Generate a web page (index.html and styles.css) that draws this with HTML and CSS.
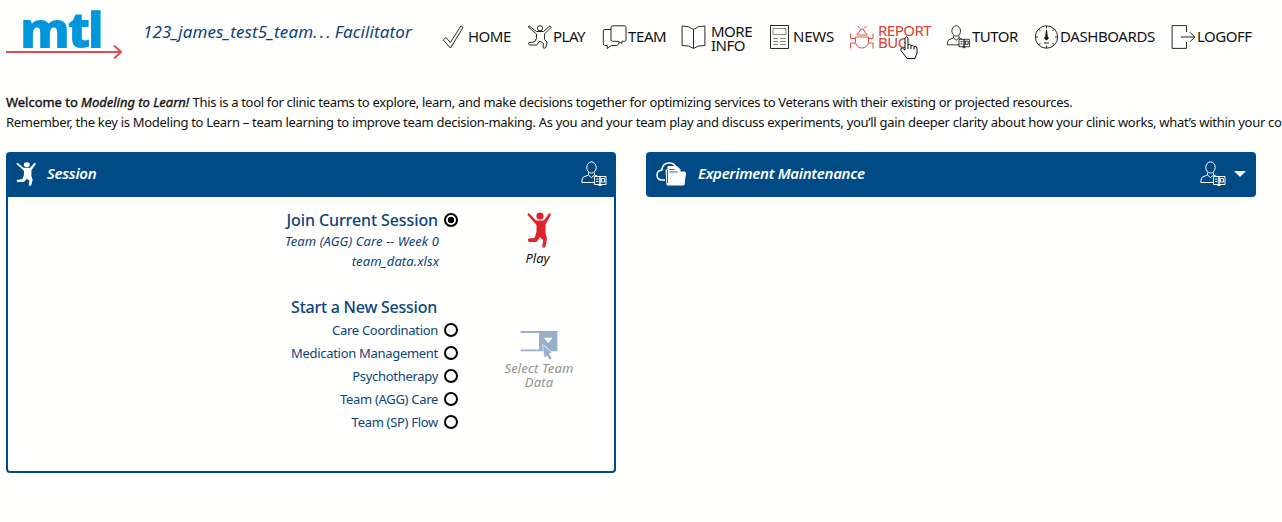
FILE: index.html
```
<!DOCTYPE html>
<html lang="en">
<head>
<meta charset="utf-8">
<title>Modeling to Learn</title>
<link rel="stylesheet" href="styles.css">
</head>
<body>
<svg class="defs" width="0" height="0" aria-hidden="true">
  <defs>
    <symbol id="jumper" viewBox="0 0 24 36" preserveAspectRatio="none">
      <circle cx="13" cy="4" r="3.600"/>
      <path d="M1.800 1 9 8.500H17L22.200 1 24 2.800 18.500 12.500V21L20 26.500 18.500 34.500Q17.500 36.500 15.500 35.300L15.300 33 16.300 28.500 13 25 9.500 30H2Q0 28.500 1.500 26.500L7.500 26 9.500 20V13L.3 2.800Z"/>
    </symbol>
    <symbol id="tutor" viewBox="0 0 26 26">
      <ellipse cx="10.500" cy="6.500" rx="4.700" ry="5.600"/>
      <path d="M7.500 11.500v2.500L2.500 16Q.8 17 .8 21.500H14M13.500 11.500v2.500l3 1.200M7.500 14l3 2.500 3-2.500"/>
      <path d="M13.500 15.500h5.500v8h-5.500zM19 15.500h6v8h-6zM15 18h2.500M15 20.500h2.500M20.500 17.500h3v3.500h-3zM17.500 24.500h3"/>
    </symbol>
  </defs>
</svg>
<header class="topbar">
  <div class="logo">
    <span class="logo-text">mtl</span>
    <svg class="logo-arrow" width="117" height="16" viewBox="0 0 117 16"><path d="M0 8H115M108 1.500 115 8 108 14.500"/></svg>
  </div>
  <div class="team">123_james_test5_team<span class="dots">...</span><span>Facilitator</span></div>
  <nav class="nav">
    <a class="item home"><svg viewBox="0 0 24 24"><path d="M.8 15 3.500 12.500 7.800 17.500 18.500.8 20.500 2.500 8 23Z"/></svg><span>HOME</span></a>
    <a class="item play"><svg viewBox="0 0 24 24"><circle cx="12.500" cy="3.200" r="2.600"/><path d="M1.500.8 9 6.500H16L22.500.8 23.500 2.500 17 9V14.500L19.500 17 18.500 22.500Q16.500 24 15.500 22.500L16 18.500 12.500 16 9 20H2Q0 19 1.500 17.500L7 17 9 13.500V9L.8 2Z"/></svg><span>PLAY</span></a>
    <a class="item chat"><svg viewBox="0 0 24 24"><path d="M10 .8h12q1.500 0 1.500 1.500v12.500q0 1.500-1.500 1.500h-2.500l-.3 2.200-3.500-2.200h-5.700q-1.500 0-1.500-1.500V2.300q0-1.500 1.500-1.500zM8.500 4.500H2.300q-1.500 0-1.500 1.500v12.500q0 2 1.500 2h2.500v3l4-3h5.500q2-.5 2.500-3.500"/></svg><span>TEAM</span></a>
    <a class="item info"><svg viewBox="0 0 24 24"><path d="M12 4.500Q8 .8.6 1V20.500Q8 20 12 23.500 16 20 23.400 20.500V1Q16 .8 12 4.500V23"/></svg><span>MORE<br>INFO</span></a>
    <a class="item news"><svg viewBox="0 0 24 24"><path d="M3 .5h18v23h-18z"/><path class="thin" d="M5.500 3.500h13v6h-13zM5.500 13.500h5M12.500 13.500h6M5.500 16.500h5M12.500 16.500h6M5.500 19.500h5M12.500 19.500h6"/></svg><span>NEWS</span></a>
    <a class="item bug"><svg viewBox="0 0 24 24"><path d="M8 .8 10.500 3.500M17 .8 14.500 3.500M7.500 10q0-2 2-2.500.5-3.500 3-3.500t3 3.500q2 .5 2 2.500zM6 12h13v5.500q-1.500 5.500-6.500 5.500T6 17.500zM6 13.500H1V8.500M19 13.500h4.500V8.500M6 18H1v5.500M19 18h4.500v5.500"/></svg><span>REPORT<br>BUG</span>
      <svg class="cursor" viewBox="0 0 20 25"><path d="M6 15V3Q7.500.500 9 3V10Q11 8.500 12 10.500 14 9.500 15 11.500 17.500 10.500 18 13V18L16 23.500H8L2 15.500Q1 12.500 3.500 13Z"/><path d="M9 10v4M12 10.500v3.500M15 11.500v3"/></svg></a>
    <a class="item tutor"><svg viewBox="0 0 26 26"><use href="#tutor"/></svg><span>TUTOR</span></a>
    <a class="item dash"><svg viewBox="0 0 24 24"><circle cx="12" cy="12" r="11.200"/><path d="M12 1v2.500M12 20.500v2.500M1 12h2.500M20.500 12H23M4.200 4.200l1.800 1.800M18 6l1.800-1.800M4.200 19.800 6 18M18 18l1.800 1.800M9.500 18h5"/><path class="solid" d="M12 5 12.800 11.500A1.700 1.700 0 1 1 11.200 11.500Z"/></svg><span>DASHBOARDS</span></a>
    <a class="item logoff"><svg viewBox="0 0 24 24"><path d="M15 7V.6H.6V23.400H15V17M9.500 12H23.300M18.500 7.200 23.300 12 18.500 16.800"/></svg><span>LOGOFF</span></a>
  </nav>
</header>
<section class="intro">
  <p><span class="strong">Welcome to <i>Modeling to Learn!</i></span> <span class="line-one">This is a tool for clinic teams to explore, learn, and make decisions together for optimizing services to Veterans with their existing or projected resources.</span></p>
  <p class="line-two">Remember, the key is Modeling to Learn – team learning to improve team decision-making. As you and your team play and discuss experiments, you’ll gain deeper clarity about how your clinic works, what’s within your co</p>
</section>
<main class="cards">
  <section class="card">
    <div class="card-head">
      <svg class="head-jumper" viewBox="0 0 24 36" preserveAspectRatio="none"><use href="#jumper"/></svg>
      <h2>Session</h2>
      <svg class="head-tutor" viewBox="0 0 26 26"><use href="#tutor"/></svg>
    </div>
    <div class="card-body">
      <div class="choices">
        <label class="big join"><span>Join Current Session</span><input type="radio" name="s" checked></label>
        <p class="detail">Team (AGG) Care -- Week 0</p>
        <p class="detail">team_data.xlsx</p>
        <h3 class="big start">Start a New Session</h3>
        <label><span>Care Coordination</span><input type="radio" name="s"></label>
        <label><span>Medication Management</span><input type="radio" name="s"></label>
        <label><span>Psychotherapy</span><input type="radio" name="s"></label>
        <label><span>Team (AGG) Care</span><input type="radio" name="s"></label>
        <label><span>Team (SP) Flow</span><input type="radio" name="s"></label>
      </div>
      <div class="actions">
        <div class="action go"><svg viewBox="0 0 24 36"><use href="#jumper"/></svg><span>Play</span></div>
        <div class="action select"><svg viewBox="0 0 38 31"><path d="M0 0H38V21H31L25 15 25 21H0V19H19V2H0Z"/><path class="arrow-down" d="M24 7h9l-4.500 5.500z"/><path class="pointer" d="M22.500 14 32.500 22 29.500 23.500 32.500 28.500 30 30 27 25.500 24.500 28Z"/></svg><span>Select Team<br>Data</span></div>
      </div>
    </div>
  </section>
  <section class="card collapsed">
    <div class="card-head">
      <svg class="head-folder" viewBox="0 0 30 24"><path class="cloud" d="M9 18H5.500Q1 17.500 1 13T6 8Q6.500 1 13 1 18 1 20 5"/><path class="folder" d="M10 8h2v-3.500h9l3 3V10h4.500q1 0 1 1L28 23H11Z"/><path class="lines" d="M13.500 7.500h5M13.500 10h8M11.500 8v13"/></svg>
      <h2>Experiment Maintenance</h2>
      <svg class="head-tutor" viewBox="0 0 26 26"><use href="#tutor"/></svg>
      <span class="caret"></span>
    </div>
  </section>
</main>
</body>
</html>
```
FILE: styles.css
```
* { box-sizing: border-box; }
body { margin: 0; width: 1282px; height: 522px; overflow: hidden; background: #fefefc; color: #111; font: 13px/20px "Noto Sans", "Open Sans", sans-serif; }
p, h2, h3 { margin: 0; }
svg { display: block; flex: none; fill: none; stroke: currentColor; }
.defs { position: absolute; }
.topbar { display: flex; height: 92px; padding-left: 6px; }
.logo { width: 137px; color: #0096dc; padding-top: 4px; }
.logo-text { display: block; width: max-content; margin-left: 14px; height: 40px; font: 800 50px/50px "Open Sans", sans-serif; letter-spacing: -2.6px; }
.logo-arrow { stroke: #dc4a55; stroke-width: 2; }
.team { width: 299px; padding-top: 20px; font-size: 17px; line-height: 24px; font-style: italic; letter-spacing: .1px; color: #0c447c; white-space: nowrap; }
.dots { letter-spacing: 2.200px; margin-right: 2px; }
.nav { display: grid; grid-template-columns: 85px 75px 79px 86px 82px 97px 88px 137px 100px; height: 74px; }
.item { position: relative; display: flex; align-items: center; gap: 1px; font-size: 15px; line-height: 14px; letter-spacing: -.5px; height: 74px; white-space: nowrap; }
.item > svg:first-child { width: 25px; height: 24px; stroke-width: .9; }
.item > span { margin-top: -2px; }
.item.info { gap: 5px; }
.item.info > span { margin-top: 1px; }
.item.bug { gap: 4px; line-height: 12.5px; color: #d8402f; }
.item.news > span { letter-spacing: -.2px; }
.item.dash > span, .item.chat > span { letter-spacing: -.4px; }
.thin { opacity: .55; }
.solid { fill: currentColor; }
.cursor { position: absolute; left: 50px; top: 35px; width: 20px; height: 25px; fill: #fff; color: #111; }
.intro { height: 60px; padding-left: 6px; white-space: nowrap; }
.strong { -webkit-text-stroke: .35px currentColor; letter-spacing: -.03px; }
.line-one { letter-spacing: -.32px; }
.line-two { letter-spacing: -.295px; }
.cards { display: flex; gap: 30px; align-items: flex-start; padding-left: 6px; }
.card { width: 610px; height: 321px; border: 2px solid #004b85; border-radius: 4px; }
.collapsed { height: 45px; }
.card-head { display: flex; align-items: center; height: 43px; background: #004b85; color: #fff; padding: 0 8px 3px; }
.collapsed .card-head { height: 41px; padding-bottom: 1px; }
.card-head h2 { font-size: 15px; font-weight: 600; font-style: italic; letter-spacing: -.3px; margin-top: -2px; }
.head-jumper { width: 20px; height: 24px; fill: #fff; stroke: none; margin-right: 11px; }
.head-tutor { width: 26px; height: 26px; margin: 0 -1px 0 auto; }
.head-folder { width: 30px; height: 24px; margin-right: 12px; }
.cloud { stroke-width: 1.5; }
.folder { fill: #fff; }
.lines { stroke: #2a62b5; }
.caret { border: 6px solid transparent; border-top-color: #fff; border-bottom: 0; margin-left: 9px; }
.card-body { display: flex; padding-top: 11px; }
.choices { flex: none; width: 450px; text-align: right; color: #0c447c; }
.choices label { display: flex; justify-content: flex-end; align-items: center; gap: 6px; height: 23px; letter-spacing: -.3px; }
.choices input { appearance: none; width: 14px; height: 14px; margin: 0; border: 2px solid #000; border-radius: 50%; background: #fff; }
.choices input:checked { background: radial-gradient(circle, #000 0 3px, #fff 3.600px); }
.choices .big { font-size: 16px; font-weight: 500; }
.choices .join { letter-spacing: -.1px; }
.detail { font-style: italic; padding-right: 19px; letter-spacing: .08px; }
.start { height: 22px; line-height: 23px; margin-top: 25px; padding-right: 21px; letter-spacing: -.24px; }
.actions { width: 156px; padding-left: 6px; font-style: italic; line-height: 14px; text-align: center; }
.action { display: flex; flex-direction: column; align-items: center; }
.go { color: #111; padding-top: 4px; }
.go svg { width: 24px; height: 36px; fill: #e0242b; stroke: none; margin-bottom: 3px; }
.go span { margin-right: 3px; }
.select { margin-top: 66px; color: #929292; letter-spacing: .15px; }
.select svg { width: 38px; height: 30px; fill: #99aec9; stroke: none; }
.arrow-down { fill: #fff; }
.pointer { stroke: #fff; stroke-width: .6; }
```
